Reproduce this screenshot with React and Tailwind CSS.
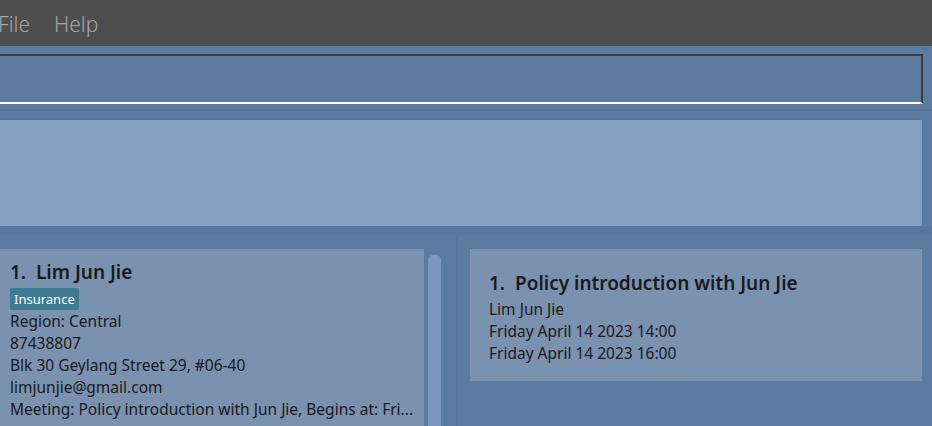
import React from 'react';

const font = { fontFamily: '"Noto Sans", "Open Sans", sans-serif' };

const PersonCard = () => (
  <div className="-ml-[10px] w-[434px] h-full bg-[#7b91b0] pl-[20px] pt-[10px] text-[#1a1a1a]">
    <div className="flex items-baseline text-[19px] font-semibold leading-[26px]">
      <span className="w-[26px]">1.</span>
      <span>Lim Jun Jie</span>
    </div>
    <div className="flex mt-[3px]">
      <span className="bg-[#3e7b91] text-white text-[13px] leading-[22px] px-[4px] rounded-[2px]">Insurance</span>
    </div>
    <div className="text-[15.5px] leading-[22px] whitespace-nowrap">
      <div>Region: Central</div>
      <div>87438807</div>
      <div>Blk 30 Geylang Street 29, #06-40</div>
      <div>limjunjie@gmail.com</div>
      <div>Meeting: Policy introduction with Jun Jie, Begins at: Fri...</div>
    </div>
  </div>
);

const MeetingCard = () => (
  <div className="w-[452px] h-[132px] bg-[#7b91b0] pl-[19px] pt-[21px] text-[#1a1a1a]">
    <div className="flex items-baseline text-[19px] font-semibold leading-[26px]">
      <span className="w-[26px]">1.</span>
      <span>Policy introduction with Jun Jie</span>
    </div>
    <div className="text-[15.5px] leading-[22px] mt-[2px]">
      <div>Lim Jun Jie</div>
      <div>Friday April 14 2023 14:00</div>
      <div>Friday April 14 2023 16:00</div>
    </div>
  </div>
);

export default function App() {
  return (
    <div className="w-[932px] h-[426px] overflow-hidden bg-[#5c7ba0] flex flex-col" style={font}>
      {/* menu bar */}
      <div className="h-[46px] shrink-0 bg-[#4e4e4e] flex items-center gap-[24px] pt-[3px] text-[21px] text-[#a4a4a4] font-light">
        <span className="-ml-[2px]">File</span>
        <span>Help</span>
      </div>

      {/* command box */}
      <div className="h-[63px] shrink-0 pt-[8px]">
        <div className="-ml-[10px] w-[933px] h-[50px] border-t-2 border-r-2 border-[#3b3b3b] border-b-2 border-b-white bg-[#5c7b9f]" />
      </div>
      <div className="h-[2px] shrink-0 bg-[#56749a]" />

      {/* result display */}
      <div className="h-[116px] shrink-0 pt-[8px] pr-[9px]">
        <div className="-ml-[10px] h-[108px] border border-[#57769c] bg-[#849fc0]" />
      </div>
      <div className="h-[8px] shrink-0 bg-[#58779c]" />

      {/* lists */}
      <div className="flex-1 flex min-h-0">
        <div className="w-[456px] flex pt-[14px]">
          <PersonCard />
          <div className="w-[32px] pl-[4px] pt-[6px]">
            <div className="w-[13px] h-[200px] bg-[#7c98bc] rounded-[5px]" />
          </div>
        </div>
        <div className="w-[2px] bg-[#57759a]" />
        <div className="flex-1 pl-[12px] pt-[14px]">
          <MeetingCard />
        </div>
      </div>
    </div>
  );
}
